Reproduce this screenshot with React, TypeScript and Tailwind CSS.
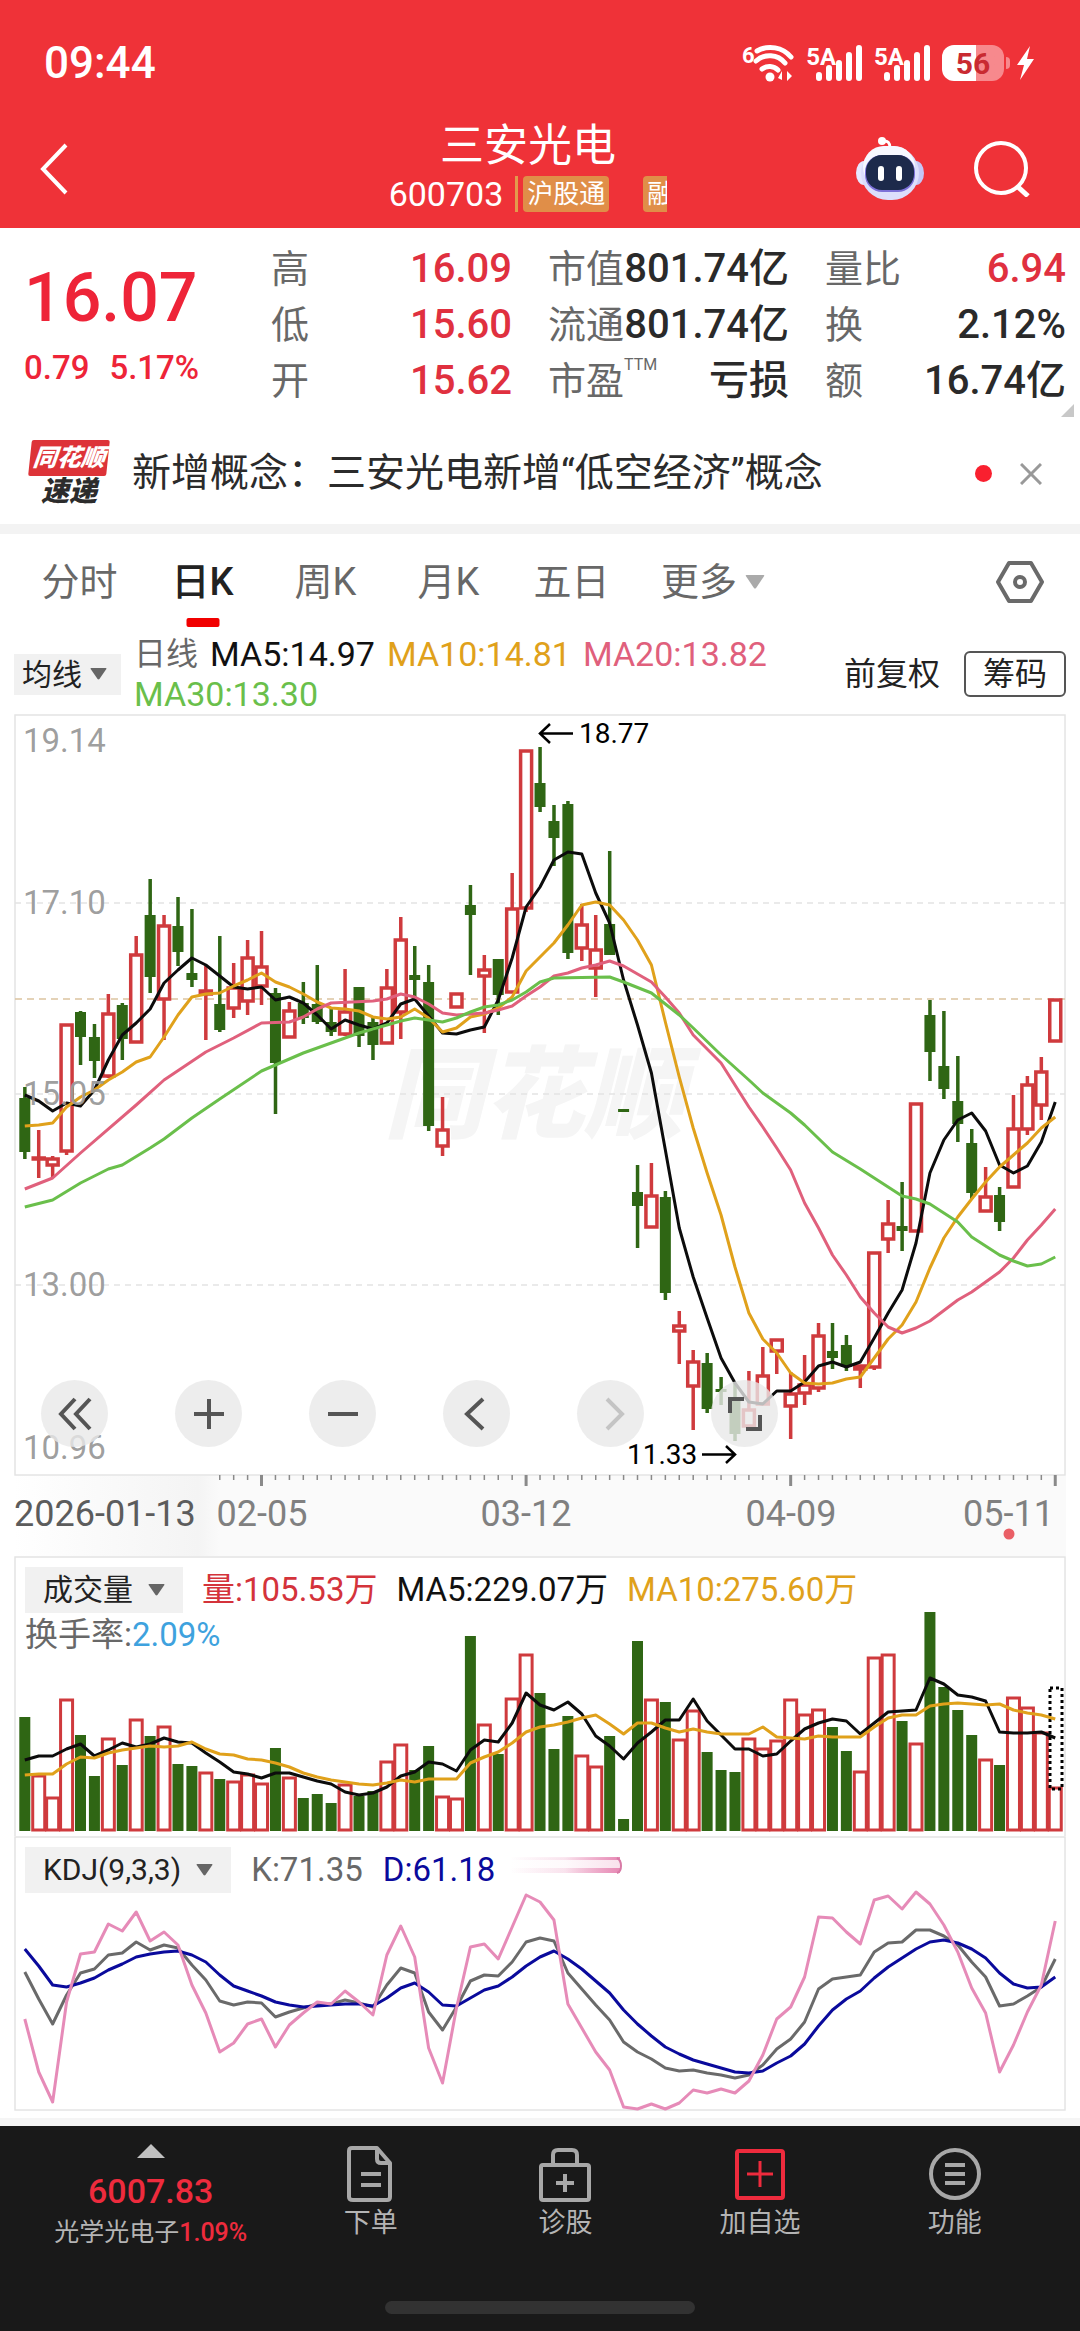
import { ReactNode } from "react";

type Candle = [up: number, high: number, top: number, bottom: number, low: number];

const STEP = 13.925;
const xAt = (i: number) => 24.8 + i * STEP;

const RED = "#cf3a3d";
const GREEN = "#2f6614";
const ORANGE = "#e0a11b";
const PINK = "#e0607c";
const LIME = "#6abf4b";

const candles: Candle[] = [
  [0, 1087, 1098, 1152, 1159], [1, 1130, 1158, 1159, 1178], [1, 1156, 1159, 1165, 1178], [1, 1025, 1025, 1151, 1155],
  [0, 1011, 1012, 1037, 1065], [0, 1024, 1037, 1061, 1078], [1, 994, 1014, 1076, 1078], [0, 1003, 1005, 1039, 1060],
  [1, 936, 955, 1042, 1042], [0, 879, 915, 977, 993], [1, 915, 926, 999, 1040], [0, 897, 926, 952, 966],
  [0, 909, 973, 980, 987], [1, 965, 991, 994, 1040], [0, 936, 1004, 1030, 1032], [1, 963, 988, 1008, 1018],
  [1, 940, 958, 1001, 1015], [1, 931, 967, 986, 1005], [0, 988, 993, 1063, 1114], [1, 1002, 1011, 1037, 1038],
  [0, 982, 1003, 1018, 1024], [0, 965, 1004, 1022, 1024], [0, 1008, 1022, 1032, 1036], [1, 969, 1012, 1034, 1036],
  [0, 987, 987, 1036, 1047], [0, 1018, 1022, 1045, 1060], [1, 969, 988, 1043, 1043], [1, 917, 940, 1012, 1039],
  [0, 946, 975, 980, 997], [0, 965, 982, 1126, 1131], [1, 1097, 1130, 1146, 1156], [1, 994, 994, 1007, 1007],
  [0, 885, 905, 915, 975], [1, 955, 970, 976, 1033], [0, 959, 959, 995, 1015], [1, 873, 909, 992, 992],
  [1, 751, 751, 908, 912], [0, 747, 783, 807, 812], [0, 805, 821, 838, 866], [0, 801, 804, 953, 959],
  [1, 904, 925, 948, 961], [1, 915, 950, 968, 997], [0, 851, 924, 955, 955], [0, 1109, 1109, 1112, 1112],
  [0, 1165, 1192, 1206, 1248], [1, 1163, 1196, 1227, 1227], [0, 1191, 1197, 1293, 1300], [1, 1311, 1326, 1331, 1364],
  [1, 1350, 1362, 1386, 1430], [0, 1353, 1363, 1409, 1413], [0, 1377, 1389, 1392, 1405], [0, 1383, 1398, 1434, 1441],
  [1, 1371, 1410, 1426, 1426], [1, 1347, 1376, 1404, 1404], [1, 1340, 1340, 1351, 1374], [1, 1372, 1394, 1406, 1439],
  [1, 1355, 1385, 1393, 1405], [1, 1323, 1336, 1388, 1392], [0, 1323, 1351, 1358, 1369], [0, 1335, 1345, 1367, 1371],
  [1, 1366, 1366, 1369, 1388], [1, 1253, 1253, 1367, 1370], [1, 1200, 1224, 1239, 1253], [0, 1182, 1226, 1231, 1251],
  [1, 1104, 1104, 1231, 1231], [0, 1000, 1015, 1052, 1081], [0, 1011, 1066, 1089, 1099], [0, 1056, 1101, 1124, 1142],
  [0, 1129, 1143, 1193, 1199], [1, 1167, 1197, 1211, 1211], [0, 1187, 1195, 1222, 1231], [1, 1095, 1129, 1187, 1187],
  [1, 1076, 1085, 1129, 1135], [1, 1057, 1072, 1105, 1120], [1, 1000, 1000, 1041, 1041],
];

const ma5 = [
  1095, 1101, 1111, 1103, 1106, 1090, 1060, 1035, 1023, 1009, 983, 970, 958, 965, 976, 987, 989, 987, 1000, 997,
  1003, 1015, 1029, 1020, 1025, 1029, 1023, 1004, 999, 1016, 1033, 1034, 1030, 1027, 1000, 958, 907, 887, 860, 852,
  854, 893, 923, 980, 1025, 1073, 1150, 1228, 1277, 1318, 1358, 1383, 1402, 1404, 1391, 1391, 1382, 1366, 1362, 1367,
  1362, 1338, 1313, 1290, 1243, 1173, 1140, 1120, 1113, 1131, 1165, 1173, 1166, 1142, 1102,
];
const ma10 = [
  1126, 1125, 1123, 1107, 1097, 1090, 1080, 1072, 1062, 1057, 1037, 1015, 997, 994, 993, 986, 980, 973, 982, 987,
  994, 1002, 1008, 1009, 1011, 1017, 1019, 1017, 1009, 1018, 1032, 1028, 1017, 1014, 1008, 997, 971, 957, 943, 925,
  905, 902, 905, 920, 940, 965, 1022, 1077, 1128, 1173, 1215, 1267, 1313, 1339, 1353, 1373, 1383, 1384, 1383, 1379,
  1377, 1358, 1339, 1325, 1302, 1268, 1238, 1217, 1199, 1182, 1167, 1155, 1143, 1128, 1117,
];
const ma20: [number, number][] = [
  [0, 1189], [2, 1178], [4, 1153], [8, 1105], [10, 1080], [13, 1052], [15, 1038], [17, 1023], [19, 1022], [20, 1017],
  [21, 1009], [22, 1003], [25, 1001], [26, 999], [27, 994], [28, 997], [29, 1004], [30, 1013], [31, 1015], [33, 1013],
  [34, 1010], [35, 1006], [36, 996], [37, 987], [38, 976], [39, 973], [40, 968], [41, 965], [42, 961], [43, 966],
  [45, 982], [46, 997], [47, 1013], [48, 1035], [50, 1063], [52, 1107], [53, 1127], [54, 1148], [55, 1170], [56, 1203],
  [57, 1228], [58, 1255], [59, 1275], [60, 1297], [61, 1313], [62, 1327], [63, 1333], [64, 1328], [65, 1321],
  [67, 1300], [68, 1292], [70, 1272], [71, 1258], [72, 1240], [73, 1225], [74, 1209],
];
const ma30: [number, number][] = [
  [0, 1207], [2, 1200], [4, 1183], [6, 1169], [7, 1165], [9, 1148], [10, 1139], [12, 1118], [14, 1099], [17, 1071],
  [20, 1053], [24, 1033], [27, 1021], [28, 1018], [30, 1022], [31, 1018], [32, 1012], [33, 1007], [34, 1005],
  [35, 1000], [36, 992], [37, 982], [38, 978], [42, 977], [43, 982], [45, 993], [47, 1015], [48, 1028], [50, 1055],
  [52, 1080], [53, 1093], [55, 1113], [56, 1125], [58, 1152], [60, 1169], [63, 1196], [64, 1199], [65, 1204],
  [67, 1222], [68, 1237], [70, 1255], [71, 1261], [72, 1266], [73, 1264], [74, 1257],
];

const volumes = [
  1717, 1775, 1797, 1699, 1735, 1776, 1738, 1765, 1719, 1736, 1726, 1764, 1766, 1772, 1779, 1781, 1774, 1783, 1748,
  1777, 1798, 1794, 1803, 1784, 1796, 1791, 1761, 1744, 1770, 1746, 1796, 1798, 1636, 1724, 1754, 1698, 1654, 1693,
  1749, 1716, 1755, 1766, 1736, 1819, 1641, 1699, 1702, 1739, 1710, 1752, 1770, 1772, 1738, 1748, 1740, 1699, 1714,
  1709, 1727, 1751, 1771, 1657, 1654, 1721, 1743, 1612, 1687, 1710, 1735, 1759, 1765, 1697, 1707, 1732, 1787,
];
const volMa5 = [
  1760, 1756, 1756, 1749, 1744, 1756, 1750, 1743, 1747, 1744, 1738, 1742, 1743, 1753, 1762, 1772, 1774, 1778, 1773,
  1773, 1777, 1781, 1784, 1792, 1795, 1793, 1787, 1776, 1772, 1762, 1764, 1771, 1750, 1740, 1742, 1723, 1693, 1705,
  1710, 1702, 1714, 1736, 1746, 1759, 1743, 1732, 1720, 1720, 1699, 1721, 1735, 1749, 1749, 1756, 1754, 1741, 1729,
  1723, 1719, 1721, 1734, 1723, 1712, 1711, 1710, 1678, 1684, 1695, 1697, 1701, 1732, 1733, 1733, 1732, 1738,
];
const volMa10 = [
  1775, 1774, 1774, 1764, 1757, 1758, 1753, 1750, 1748, 1746, 1747, 1746, 1742, 1749, 1754, 1755, 1759, 1760, 1763,
  1767, 1773, 1777, 1780, 1782, 1784, 1785, 1783, 1780, 1782, 1779, 1779, 1779, 1763, 1757, 1752, 1743, 1732, 1727,
  1725, 1722, 1718, 1715, 1724, 1734, 1723, 1723, 1728, 1732, 1729, 1732, 1734, 1734, 1734, 1727, 1737, 1738, 1739,
  1736, 1737, 1737, 1737, 1727, 1718, 1715, 1715, 1706, 1704, 1703, 1704, 1705, 1704, 1710, 1713, 1715, 1719,
];

const kLine = [
  1972, 1999, 2024, 1995, 1973, 1969, 1955, 1953, 1942, 1950, 1945, 1948, 1965, 1980, 2001, 2005, 2002, 2003, 2017,
  2012, 2008, 2004, 2004, 2000, 2003, 2007, 1985, 1968, 1973, 2012, 2030, 2007, 1981, 1975, 1976, 1962, 1942, 1938,
  1941, 1973, 1989, 2005, 2020, 2042, 2052, 2059, 2068, 2071, 2070, 2073, 2075, 2078, 2075, 2065, 2049, 2039, 2022,
  1989, 1979, 1977, 1975, 1952, 1943, 1942, 1930, 1930, 1936, 1945, 1962, 1977, 2006, 2004, 1996, 1987, 1959,
];
const dLine = [
  1949, 1966, 1985, 1987, 1983, 1978, 1970, 1964, 1957, 1954, 1952, 1951, 1955, 1962, 1975, 1986, 1991, 1996, 2002,
  2005, 2007, 2006, 2005, 2004, 2004, 2006, 1998, 1988, 1983, 1992, 2005, 2006, 1998, 1990, 1986, 1977, 1966, 1957,
  1951, 1959, 1969, 1981, 1993, 2010, 2024, 2036, 2047, 2054, 2060, 2064, 2068, 2072, 2073, 2071, 2063, 2056, 2044,
  2026, 2010, 1999, 1991, 1978, 1967, 1958, 1949, 1942, 1940, 1943, 1949, 1958, 1973, 1984, 1988, 1987, 1977,
];
const jLine = [
  2019, 2072, 2102, 2002, 1954, 1952, 1924, 1931, 1912, 1941, 1932, 1945, 1985, 2013, 2052, 2043, 2024, 2019, 2047,
  2025, 2013, 2002, 2004, 1991, 2002, 2015, 1955, 1926, 1957, 2048, 2083, 2008, 1947, 1944, 1959, 1927, 1895, 1902,
  1920, 2004, 2028, 2052, 2070, 2107, 2109, 2104, 2109, 2103, 2090, 2093, 2089, 2093, 2081, 2055, 2019, 2007, 1977,
  1917, 1918, 1932, 1944, 1900, 1896, 1909, 1892, 1904, 1925, 1952, 1988, 2013, 2072, 2045, 2012, 1985, 1921,
];

const Line = ({ data, color, width = 3 }: { data: (number | [number, number])[]; color: string; width?: number }) => (
  <polyline
    points={data.map((d, i) => (typeof d === "number" ? `${xAt(i)},${d}` : `${xAt(d[0])},${d[1]}`)).join(" ")}
    fill="none"
    stroke={color}
    strokeWidth={width}
    strokeLinejoin="round"
  />
);

const Caret = ({ className }: { className: string }) => (
  <svg viewBox="0 0 18 13" className={className} aria-hidden="true">
    <path d="M1 0h16q1 0 .5 1L10 12q-1 1-2 0L.5 1Q0 0 1 0Z" fill="currentColor" />
  </svg>
);

const Signal = () => (
  <div className="flex items-end">
    <span className="-mr-5 mb-3 text-2xl leading-6 font-bold">5A</span>
    <svg viewBox="0 0 46 36" className="h-9 w-[46px]" fill="none" stroke="currentColor" strokeWidth="6" strokeLinecap="round">
      <path d="M3 30v3M13 23v10M23 18v15M33 10v23M43 3v30" />
    </svg>
  </div>
);

const StatusBar = () => (
  <div className="flex h-[126px] items-center justify-between pr-[46px] pl-11 text-white">
    <span className="text-[44px] font-medium">09:44</span>
    <div className="flex items-center gap-3">
      <svg viewBox="0 0 52 38" className="h-[38px] w-[52px]">
        <text x="0" y="19" fontSize="22" fontWeight="700" fill="#fff">6</text>
        <g fill="none" stroke="#fff" strokeWidth="5" strokeLinecap="round">
          <path d="M15 7a27 27 0 0 1 34 6" />
          <path d="M14 17a20 20 0 0 1 29 2" />
          <path d="M20 25a12 12 0 0 1 16 1" />
        </g>
        <circle cx="28" cy="33" r="4.5" fill="#fff" />
        <path d="M36 34l4-7v9zM50 32l-5-5v10z" fill="#fff" />
      </svg>
      <Signal />
      <Signal />
      <div className="flex items-center">
        <div className="flex h-9 w-[62px] items-center justify-center rounded-xl bg-linear-to-r from-white from-55% to-[#f7898d] to-55%">
          <span className="text-[30px] font-bold text-[#c92a31]">56</span>
        </div>
        <div className="ml-[2px] h-3 w-1 rounded-r bg-[#f7898d]" />
        <svg viewBox="0 0 17 36" className="ml-[7px] h-9 w-[17px]">
          <path d="M13 1L0 20h7L3 35 17 14h-7z" fill="#fff" />
        </svg>
      </div>
    </div>
  </div>
);

const RobotIcon = () => (
  <svg viewBox="0 0 68 64" className="h-16 w-[68px]">
    <path d="M27 4q7-1 7 7" fill="none" stroke="#fff" strokeWidth="3" />
    <circle cx="26" cy="4" r="4" fill="#fff" />
    <ellipse cx="8" cy="36" rx="8" ry="12" fill="#e6e8ff" />
    <ellipse cx="60" cy="36" rx="8" ry="12" fill="#c5c6f5" />
    <rect x="5" y="9" width="58" height="54" rx="27" fill="#dcdefc" />
    <rect x="7" y="9" width="52" height="42" rx="21" fill="#f7f8ff" />
    <rect x="9" y="18" width="50" height="37" rx="17" fill="#7c70d8" />
    <rect x="10" y="18" width="48" height="35" rx="16" fill="#1d2a4b" />
    <path d="M25 32v9M43 32v9" stroke="#fff" strokeWidth="6" strokeLinecap="round" />
  </svg>
);

const TitleBar = () => (
  <div className="grid h-[102px] grid-cols-[1fr_auto_1fr] items-center pr-6 pb-4 text-white">
    <button aria-label="返回" className="ml-10 w-8">
      <svg viewBox="0 0 28 52" className="h-[52px] w-7" fill="none" stroke="currentColor" strokeWidth="4">
        <path d="M26 2L3 26l23 24" />
      </svg>
    </button>
    <div className="flex flex-col items-center">
      <h1 className="mb-[10px] text-[44px] leading-10">三安光电</h1>
      <div className="flex h-9 items-center">
        <span className="text-[34px]">600703</span>
        <span className="ml-3 h-9 w-[3px] bg-[#e39a4c]" />
        <span className="ml-[5px] h-9 rounded-sm bg-[#e08e48] px-1 text-[26px] leading-9">沪股通</span>
        <span className="ml-[34px] h-9 w-6 overflow-hidden rounded-l-sm bg-[#e08e48] pl-1 text-[26px] leading-9">融</span>
      </div>
    </div>
    <div className="flex items-center justify-end gap-[50px] pr-[26px]">
      <button aria-label="智能助手">
        <RobotIcon />
      </button>
      <button aria-label="搜索">
        <svg viewBox="0 0 56 56" className="h-14 w-14" fill="none" stroke="currentColor" strokeWidth="4">
          <circle cx="27" cy="27" r="25" />
          <path d="M43 45l11 10" strokeWidth="5" />
        </svg>
      </button>
    </div>
  </div>
);

const Stat = ({ label, sup, value, red }: { label: string; sup?: string; value: string; red?: boolean }) => (
  <div className="flex items-center justify-between whitespace-nowrap">
    <dt className="flex text-[38px] leading-[56px] text-[#686868]">
      {label}
      {sup && <sup className="top-0 mt-1 text-base leading-4">{sup}</sup>}
    </dt>
    <dd className={`text-[40px] leading-[56px] font-medium ${red ? "text-[#e0303f]" : "text-[#2a2a2a]"}`}>{value}</dd>
  </div>
);

const Quote = () => (
  <section className="relative flex h-[198px] pt-[13px] pr-[14px] pl-6">
    <div className="w-[247px] pt-[17px] text-[#ee2438]">
      <div className="text-[68px] leading-[80px] font-medium">16.07</div>
      <div className="mt-[10px] flex gap-5 text-[33px] leading-10 font-medium">
        <span>0.79</span>
        <span>5.17%</span>
      </div>
    </div>
    <dl className="grid flex-1 grid-cols-3 content-start gap-x-9">
      <Stat label="高" value="16.09" red />
      <Stat label="市值" value="801.74亿" />
      <Stat label="量比" value="6.94" red />
      <Stat label="低" value="15.60" red />
      <Stat label="流通" value="801.74亿" />
      <Stat label="换" value="2.12%" />
      <Stat label="开" value="15.62" red />
      <Stat label="市盈" sup="TTM" value="亏损" />
      <Stat label="额" value="16.74亿" />
    </dl>
    <svg viewBox="0 0 13 13" className="absolute right-[6px] bottom-[9px] h-[13px] w-[13px]">
      <path d="M13 0v13H0z" fill="#c8c8c8" />
    </svg>
  </section>
);

const News = () => (
  <section className="flex h-[98px] items-center pr-[38px] pb-[3px] pl-7">
    <div className="flex w-[82px] flex-col items-center font-black italic">
      <span className="w-[78px] -skew-x-6 rounded-xs bg-[#dd3338] text-center text-2xl leading-9 text-white">同花顺</span>
      <span className="text-[28px] leading-8 text-[#2c2c2c]">速递</span>
    </div>
    <a href="#news" className="ml-[22px] flex-1 text-[39px] whitespace-nowrap text-[#2b2b2b]">
      新增概念：三安光电新增“低空经济”概念
    </a>
    <span className="h-[17px] w-[17px] rounded-full bg-[#f9202f]" />
    <button aria-label="关闭" className="ml-7">
      <svg viewBox="0 0 22 22" className="h-[22px] w-[22px]" stroke="#999" strokeWidth="3">
        <path d="M1 1l20 20M21 1L1 21" />
      </svg>
    </button>
  </section>
);

const tabs = ["分时", "日K", "周K", "月K", "五日"];

const Tabs = () => (
  <nav className="flex h-24 items-center pr-[36px] pl-[18px] text-[38px] text-[#686868]">
    {tabs.map((t) => (
      <button key={t} className={`relative h-full w-[123px] ${t === "日K" ? "font-medium text-[#222]" : ""}`}>
        {t}
        {t === "日K" && <span className="absolute bottom-[3px] left-1/2 h-[9px] w-[33px] -translate-x-1/2 rounded-xs bg-[#f10000]" />}
      </button>
    ))}
    <button className="ml-7 flex items-center gap-2">
      更多
      <Caret className="h-[14px] w-5 text-[#aaa]" />
    </button>
    <button aria-label="设置" className="ml-auto">
      <svg viewBox="0 0 48 44" className="h-11 w-12" fill="none" stroke="#6a6a6a" strokeWidth="4" strokeLinejoin="round">
        <path d="M13 3h22l11 19-11 19H13L2 22z" />
        <circle cx="24" cy="22" r="5" />
      </svg>
    </button>
  </nav>
);

const Indicators = () => (
  <div className="flex h-[84px] items-center px-[14px] pt-1 text-[34px]">
    <button className="flex h-[41px] w-[107px] items-center gap-2 bg-[#f1f1f1] pl-2 text-[30px] text-[#222]">
      均线
      <Caret className="h-3 w-[17px] text-[#666]" />
    </button>
    <div className="ml-[13px] flex w-[660px] flex-wrap gap-x-[12px] leading-10">
      <span className="text-[32px] text-[#686868]">日线</span>
      <span className="text-[#111]">MA5:14.97</span>
      <span className="text-[#e0a11b]">MA10:14.81</span>
      <span className="text-[#e0607c]">MA20:13.82</span>
      <span className="text-[#6abf4b]">MA30:13.30</span>
    </div>
    <button className="ml-auto text-[32px] text-[#222]">前复权</button>
    <button className="ml-6 h-[46px] w-[102px] rounded-md border-2 border-[#555] text-[32px] leading-10 text-[#222]">筹码</button>
  </div>
);

const RoundButton = ({ label, children, faded }: { label: string; children: ReactNode; faded?: boolean }) => (
  <button aria-label={label} className="flex h-[67px] w-[67px] items-center justify-center rounded-full bg-[#e9e9e9]/80">
    <svg
      viewBox="0 0 34 34"
      className="h-[34px] w-[34px]"
      fill="none"
      stroke={faded ? "#c4c4c4" : "#555"}
      strokeWidth="4"
    >
      {children}
    </svg>
  </button>
);

const axisPrices: [string, number][] = [["19.14", 752], ["17.10", 914], ["15.05", 1105], ["13.00", 1296], ["10.96", 1459]];

const PriceChart = () => (
  <div className="relative mx-[14px]">
    <svg viewBox="14 714 1052 842" className="block h-auto w-full" fontSize="33">
      <defs>
        <linearGradient id="dateFade">
          <stop offset="0" stopColor="#fff" />
          <stop offset="0.9" stopColor="#f4f4f4" />
          <stop offset="1" stopColor="#fafafa" />
        </linearGradient>
      </defs>
      <rect x="14" y="1476" width="1052" height="80" fill="#fafafa" />
      <rect x="14" y="1476" width="205" height="80" fill="url(#dateFade)" />
      <text x="384" y="1130" fontSize="100" fontWeight="900" fontStyle="italic" fill="#f5f5f5">同花顺</text>
      <rect x="15" y="715" width="1050" height="760" fill="none" stroke="#e4e4e4" strokeWidth="1.5" />
      {[903, 1094, 1285].map((y) => (
        <path key={y} d={`M15 ${y}H1065`} stroke="#e3e3e3" strokeWidth="1.5" strokeDasharray="6 5" />
      ))}
      <path d="M15 999H1065" stroke="#dcc3a0" strokeWidth="1.5" strokeDasharray="7 5" />

      {candles.map(([up, high, top, bottom, low], i) => {
        const x = xAt(i);
        return up ? (
          <g key={i} stroke={RED} fill="#fff">
            <path d={`M${x} ${high}V${top}M${x} ${bottom}V${low}`} strokeWidth="3.5" />
            <rect x={x - 5.5} y={top} width="11" height={bottom - top} strokeWidth="3.5" />
          </g>
        ) : (
          <g key={i} fill={GREEN}>
            <rect x={x - 1.7} y={high} width="3.5" height={low - high} />
            <rect x={x - 5.5} y={top} width="11" height={bottom - top} />
          </g>
        );
      })}

      <Line data={ma5} color="#0c0c0c" />
      <Line data={ma10} color={ORANGE} />
      <Line data={ma20} color={PINK} />
      <Line data={ma30} color={LIME} />

      {axisPrices.map(([t, y]) => (
        <text key={t} x="23" y={y} fill="#999" fillOpacity="0.95">{t}</text>
      ))}

      <g stroke="#000" strokeWidth="2.5" fill="none">
        <path d="M573 733.5H540M550 724l-10 9.5 10 9.5" />
        <path d="M702 1454.5h32M726 1446l9 8.5-9 8.5" />
      </g>
      <text x="579" y="743" fontSize="28" fill="#000">18.77</text>
      <text x="627" y="1464" fontSize="28" fill="#000">11.33</text>

      {candles.map((_, i) => {
        if (i < 14) return null;
        const major = [17, 36, 55, 74].includes(i);
        return <path key={i} d={`M${xAt(i)} 1475v${major ? 11 : 5}`} stroke="#8a8a8a" strokeWidth={major ? 3 : 1.5} />;
      })}
      <g fontSize="36" fill="#808080">
        <text x="14" y="1526" fill="#5c5c5c">2026-01-13</text>
        <text x="262" y="1526" textAnchor="middle">02-05</text>
        <text x="526" y="1526" textAnchor="middle">03-12</text>
        <text x="791" y="1526" textAnchor="middle">04-09</text>
        <text x="1054" y="1526" textAnchor="end">05-11</text>
      </g>
      <circle cx="1009" cy="1534" r="5.5" fill="#ea5f66" />
    </svg>

    <div className="absolute bottom-[109px] left-[27px] flex gap-[67px]">
      <RoundButton label="最早">
        <path d="M17 2L3 17l14 15M32 2L18 17l14 15" />
      </RoundButton>
      <RoundButton label="放大">
        <path d="M17 2v30M2 17h30" />
      </RoundButton>
      <RoundButton label="缩小">
        <path d="M2 17h30" />
      </RoundButton>
      <RoundButton label="左移">
        <path d="M23 2L7 17l16 15" />
      </RoundButton>
      <RoundButton label="右移" faded>
        <path d="M13 2l15 15-15 15" />
      </RoundButton>
      <RoundButton label="全屏">
        <path d="M16 2H2v14M32 18v14H18" />
      </RoundButton>
    </div>
  </div>
);

const PanelSelect = ({ children }: { children: ReactNode }) => (
  <button className="flex h-[46px] items-center gap-[15px] bg-[#f1f1f1] px-[18px] text-[30px] text-[#222]">
    {children}
    <Caret className="h-3 w-[17px] text-[#666]" />
  </button>
);

const VolumePanel = () => (
  <section className="relative mx-[14px]">
    <svg viewBox="14 1556 1052 280" className="block h-auto w-full">
      <rect x="15" y="1557" width="1050" height="280" fill="none" stroke="#e4e4e4" strokeWidth="1.5" />
      {volumes.map((y, i) =>
        candles[i][0] ? (
          <rect key={i} x={xAt(i) - 6} y={y + 1} width="12" height={1829 - y} fill="#fff" stroke={RED} strokeWidth="3" />
        ) : (
          <rect key={i} x={xAt(i) - 5.5} y={y} width="11" height={1831 - y} fill={GREEN} />
        )
      )}
      <rect x="1050" y="1688" width="12" height="101" fill="none" stroke="#000" strokeWidth="3" strokeDasharray="3 3" />
      <Line data={volMa5} color="#0c0c0c" />
      <Line data={volMa10} color={ORANGE} />
    </svg>
    <div className="absolute top-[9px] left-[11px] text-[33px] whitespace-nowrap">
      <div className="flex items-center gap-[19px]">
        <PanelSelect>成交量</PanelSelect>
        <span className="text-[#d4333b]">量:105.53万</span>
        <span className="text-[#111]">MA5:229.07万</span>
        <span className="text-[#e0a11b]">MA10:275.60万</span>
      </div>
      <div className="leading-10 text-[#686868]">
        换手率:<span className="text-[#3ea2de]">2.09%</span>
      </div>
    </div>
  </section>
);

const KdjPanel = () => (
  <section className="relative mx-[14px]">
    <svg viewBox="14 1836 1052 275" className="block h-auto w-full">
      <defs>
        <linearGradient id="smear">
          <stop offset="0" stopColor="#e78ab5" stopOpacity="0" />
          <stop offset="0.5" stopColor="#e78ab5" stopOpacity="0.2" />
          <stop offset="1" stopColor="#e78ab5" />
        </linearGradient>
      </defs>
      <rect x="15" y="1837" width="1050" height="273" fill="none" stroke="#e4e4e4" strokeWidth="1.5" />
      <rect x="510" y="1858" width="110" height="15" fill="url(#smear)" opacity="0.25" />
      <rect x="510" y="1868" width="110" height="5" fill="url(#smear)" />
      <rect x="510" y="1857" width="110" height="3" fill="url(#smear)" />
      <path d="M617 1858q4 2 4 8t-4 7" fill="none" stroke="#d87aa6" strokeWidth="2" />
      <Line data={kLine} color="#6a6a6a" />
      <Line data={dLine} color="#0a0a9c" />
      <Line data={jLine} color="#e68bb8" />
    </svg>
    <div className="absolute top-[9px] left-[11px] flex items-center gap-5 text-[33px]">
      <PanelSelect>KDJ(9,3,3)</PanelSelect>
      <span className="text-[#686868]">K:71.35</span>
      <span className="text-[#0a0a9c]">D:61.18</span>
    </div>
  </section>
);

const NavItem = ({ label, red, children }: { label: string; red?: boolean; children: ReactNode }) => (
  <button className="flex flex-col items-center pt-5 text-[27px] leading-9 text-[#b4b4b4]">
    <svg
      viewBox="0 0 54 56"
      className="mb-[3px] h-14 w-[54px]"
      fill="none"
      stroke={red ? "#ee2b3d" : "#a8a8a8"}
      strokeWidth="4"
      strokeLinejoin="round"
    >
      {children}
    </svg>
    {label}
  </button>
);

const BottomNav = () => (
  <footer className="flex flex-col items-center bg-[#191919] pb-[17px]">
    <div className="grid h-[175px] w-full grid-cols-[274fr_195fr_195fr_195fr_195fr] pr-7">
      <button className="flex flex-col items-center pt-[18px] pl-7 whitespace-nowrap">
        <svg viewBox="0 0 28 14" className="h-[14px] w-7">
          <path d="M14 0l14 14H0z" fill="#c0c0c0" />
        </svg>
        <span className="mt-3 text-[34px] leading-[42px] font-medium text-[#ee2b3d]">6007.83</span>
        <span className="text-[25px] leading-[42px] text-[#b4b4b4]">
          光学光电子<span className="font-medium text-[#ee2b3d]">1.09%</span>
        </span>
      </button>
      <NavItem label="下单">
        <path d="M8 2h25l13 15v34q0 3-3 3H9q-4 0-4-3V5q0-3 3-3ZM33 2v11q0 4 4 4h9M17 28h20M17 39h20" />
      </NavItem>
      <NavItem label="诊股">
        <path d="M15 19V9q0-5 5-5h14q5 0 5 5v10M5 19h44q2 0 2 2v31q0 2-2 2H5q-2 0-2-2V21q0-2 2-2ZM27 28v18M18 37h18" />
      </NavItem>
      <NavItem label="加自选" red>
        <rect x="4" y="5" width="46" height="47" rx="2" />
        <path d="M27 15v26M14 28h26" strokeWidth="3" />
      </NavItem>
      <NavItem label="功能">
        <circle cx="27" cy="28" r="24" />
        <path d="M17 19h20M17 28h20M17 37h20" />
      </NavItem>
    </div>
    <div className="h-[13px] w-[310px] rounded-full bg-[#323232]" />
  </footer>
);

const App = () => (
  <main className="w-full bg-white font-[Roboto,'Noto_Sans_CJK_SC',sans-serif]">
    <header className="bg-[#ef3238]">
      <StatusBar />
      <TitleBar />
    </header>
    <Quote />
    <News />
    <div className="h-[10px] bg-[#f3f3f3]" />
    <Tabs />
    <Indicators />
    <PriceChart />
    <VolumePanel />
    <KdjPanel />
    <div className="mt-[7px] h-2 bg-[#f5f5f5]" />
    <BottomNav />
  </main>
);

export default App;
